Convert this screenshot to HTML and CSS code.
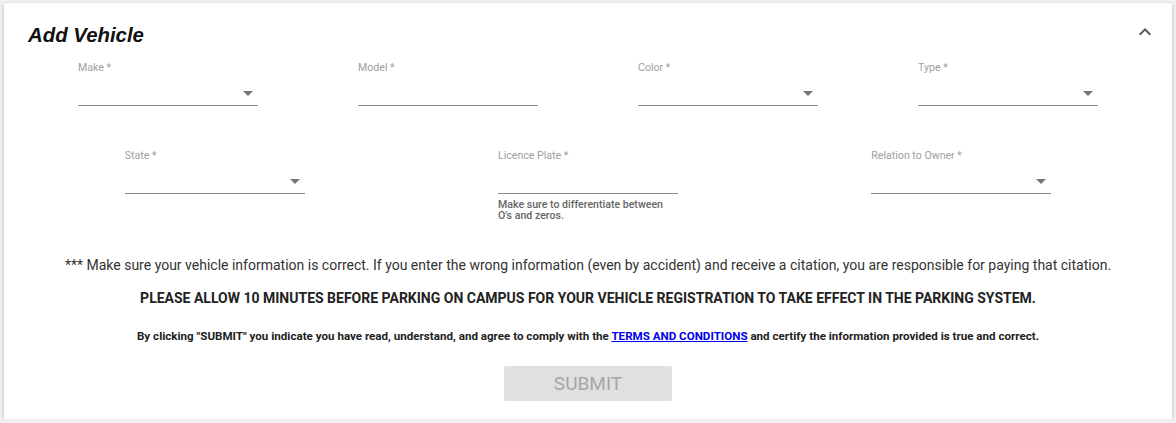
FILE: index.html
```html
<!DOCTYPE html>
<html lang="en">
<head>
    <meta charset="UTF-8">
    <meta name="viewport" content="width=device-width, initial-scale=1.0">
    <title>Add Vehicle</title>
    <link rel="stylesheet" href="styles.css">
</head>
<body>
    <div class="card">
        <div class="card-header">
            <h2>Add Vehicle</h2>
            <button class="collapse-btn" aria-label="Collapse">
                <svg viewBox="0 0 24 24" width="24" height="24"><path d="M12 8l-6 6 1.41 1.41L12 10.83l4.59 4.58L18 14z"/></svg>
            </button>
        </div>

        <div class="form-row four">
            <div class="cell">
                <div class="field">
                    <label>Make *</label>
                    <div class="input select"><svg class="drop" viewBox="0 0 24 24"><path d="M7 10l5 5 5-5z"/></svg></div>
                </div>
            </div>
            <div class="cell">
                <div class="field">
                    <label>Model *</label>
                    <div class="input"></div>
                </div>
            </div>
            <div class="cell">
                <div class="field">
                    <label>Color *</label>
                    <div class="input select"><svg class="drop" viewBox="0 0 24 24"><path d="M7 10l5 5 5-5z"/></svg></div>
                </div>
            </div>
            <div class="cell">
                <div class="field">
                    <label>Type *</label>
                    <div class="input select"><svg class="drop" viewBox="0 0 24 24"><path d="M7 10l5 5 5-5z"/></svg></div>
                </div>
            </div>
        </div>

        <div class="form-row three">
            <div class="cell">
                <div class="field">
                    <label>State *</label>
                    <div class="input select"><svg class="drop" viewBox="0 0 24 24"><path d="M7 10l5 5 5-5z"/></svg></div>
                </div>
            </div>
            <div class="cell">
                <div class="field">
                    <label>Licence Plate *</label>
                    <div class="input"></div>
                    <p class="helper">Make sure to differentiate between O's and zeros.</p>
                </div>
            </div>
            <div class="cell">
                <div class="field">
                    <label>Relation to Owner *</label>
                    <div class="input select"><svg class="drop" viewBox="0 0 24 24"><path d="M7 10l5 5 5-5z"/></svg></div>
                </div>
            </div>
        </div>

        <p class="note">*** Make sure your vehicle information is correct. If you enter the wrong information (even by accident) and receive a citation, you are responsible for paying that citation.</p>
        <p class="notice">PLEASE ALLOW 10 MINUTES BEFORE PARKING ON CAMPUS FOR YOUR VEHICLE REGISTRATION TO TAKE EFFECT IN THE PARKING SYSTEM.</p>
        <p class="terms">By clicking "SUBMIT" you indicate you have read, understand, and agree to comply with the <a href="#">TERMS AND CONDITIONS</a> and certify the information provided is true and correct.</p>

        <div class="actions">
            <button class="submit-btn" disabled>SUBMIT</button>
        </div>
    </div>
</body>
</html>
```

FILE: styles.css
```css
body {
    margin: 0;
    background-color: #f0f0f0;
    font-family: 'Roboto', 'Liberation Sans', sans-serif;
    padding: 3px 4px 0 4px;
}

.card {
    background-color: #fff;
    box-shadow: 0 1px 3px rgba(0, 0, 0, 0.25);
    padding: 0 24px 16px 24px;
    height: 416px;
    box-sizing: border-box;
}

.card-header {
    display: flex;
    justify-content: space-between;
    align-items: center;
    height: 58px;
}

.card-header h2 {
    margin: 0;
    font-family: 'Liberation Sans', Arial, sans-serif;
    font-size: 20.4px;
    font-weight: bold;
    font-style: italic;
    color: #111;
    padding-top: 6px;
}

.collapse-btn {
    background: none;
    border: none;
    padding: 0;
    margin-right: -9px;
    margin-top: 0;
    cursor: pointer;
}

.collapse-btn svg {
    display: block;
    fill: #555;
}

.form-row {
    display: grid;
}

.form-row.four {
    grid-template-columns: repeat(4, 1fr);
    height: 88px;
}

.form-row.three {
    grid-template-columns: repeat(3, 1fr);
    height: 108px;
}

.cell {
    display: flex;
    justify-content: center;
}

.field {
    width: 180px;
    position: relative;
}

.field label {
    display: block;
    font-size: 10.6px;
    color: #9e9e9e;
    line-height: 14px;
}

.input {
    height: 30px;
    border-bottom: 1px solid #8a8a8a;
    position: relative;
}

.drop {
    position: absolute;
    right: -2px;
    top: 6px;
    width: 24px;
    height: 24px;
    fill: #757575;
}

.helper {
    margin: 5px 0 0 0;
    width: 172px;
    font-size: 10.6px;
    font-weight: 500;
    line-height: 11px;
    color: #666;
}

.note {
    margin: 0;
    text-align: center;
    font-size: 14px;
    color: #333;
}

.notice {
    margin: 17px 0 0 0;
    text-align: center;
    font-size: 14px;
    font-weight: bold;
    color: #222;
}

.terms {
    margin: 23px 0 0 0;
    text-align: center;
    font-size: 11.6px;
    font-weight: bold;
    color: #222;
}

.terms a {
    color: #0000ee;
}

.actions {
    display: flex;
    justify-content: center;
    margin-top: 23px;
}

.submit-btn {
    width: 168px;
    height: 35px;
    background-color: #e0e0e0;
    color: #a6a6a6;
    border: none;
    border-radius: 2px;
    font-family: 'Roboto', sans-serif;
    font-size: 19px;
}
```
